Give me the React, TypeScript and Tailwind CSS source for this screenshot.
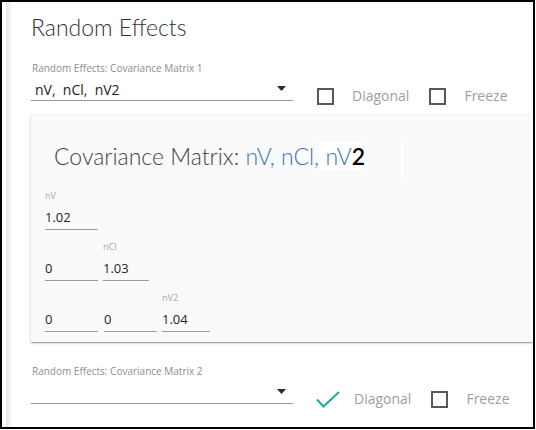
import React from "react";

const Checkbox = () => (
  <div className="w-[17px] h-[17px] shrink-0 border-2 border-[#585858] bg-white" />
);

const Arrow = () => (
  <svg width="9" height="5" viewBox="0 0 9 5" className="mt-[6px] mr-[7px] shrink-0">
    <polygon points="0,0 9,0 4.5,5" fill="#2b2b2b" />
  </svg>
);

const Check = () => (
  <svg width="24" height="17" viewBox="0 0 24 17" className="shrink-0">
    <polyline points="1,8.5 7.5,15.5 23,1" fill="none" stroke="#26a69a" strokeWidth="2" />
  </svg>
);

const SelectRow = ({
  label,
  value,
  checked,
}: {
  label: string;
  value: string;
  checked: boolean;
}) => (
  <div className="flex">
    <div className="w-[262px] shrink-0 flex flex-col">
      <div className="text-[10px] leading-[14px] text-[#8e8e8e] pl-[1px]">{label}</div>
      <div className="mt-[5px] h-[21px] flex justify-between border-b border-[#9a9a9a]">
        <span className="pl-[4px] text-[14px] leading-[20px] text-[#222] whitespace-pre">{value}</span>
        <Arrow />
      </div>
    </div>
    <div className="mt-[25px] h-[20px] flex items-center">
      {checked ? (
        <div className="ml-[23px] flex items-center">
          <Check />
          <span className="ml-[14px] text-[14px] leading-[20px] text-[#9e9e9e]">Diagonal</span>
        </div>
      ) : (
        <div className="ml-[24px] flex items-center">
          <Checkbox />
          <span className="ml-[18px] text-[14px] leading-[20px] text-[#9e9e9e]">Diagonal</span>
        </div>
      )}
      <div className="ml-[20px]">
        <Checkbox />
      </div>
      <span className="ml-[18px] text-[14px] leading-[20px] text-[#9e9e9e]">Freeze</span>
    </div>
  </div>
);

const Cell = ({ w, label, value, ml }: { w: string; label?: string; value: string; ml?: string }) => (
  <div className={`flex flex-col ${w} ${ml ?? ""}`}>
    <div className="h-[12px] text-[9px] leading-[12px] text-[#a8a8a8]">{label ?? ""}</div>
    <div className="mt-[6px] h-[22px] pb-[3px] border-b border-[#9a9a9a] text-[13px] leading-[18px] text-[#222]">
      {value}
    </div>
  </div>
);

export default function App() {
  return (
    <div className="w-[536px] h-[430px] bg-white font-['Open_Sans',sans-serif]">
      <div className="w-[535px] h-[429px] border-2 border-black flex overflow-hidden bg-white">
        <div className="w-[4px] shrink-0" />
        <div className="w-[7px] shrink-0 bg-linear-to-r from-[#e6e6e6] to-white" />
        <div className="flex-1 pl-[18px] pt-[10px] flex flex-col">
          <div className="font-['Lato',sans-serif] text-[23px] leading-[30px] font-light text-[#333]">
            Random Effects
          </div>
          <div className="mt-[19px]">
            <SelectRow label="Random Effects: Covariance Matrix 1" value="nV,  nCl,  nV2" checked={false} />
          </div>
          <div className="mt-[9px] bg-[#fafafa] shadow-[0_1px_3px_rgba(0,0,0,0.2),0_1px_1px_rgba(0,0,0,0.14),0_2px_1px_-1px_rgba(0,0,0,0.12)] pt-[26px] pb-[10px] pl-[14px]">
            <div className="flex h-[30px] items-start pl-[9px]">
              <span className="font-['Lato',sans-serif] text-[23px] leading-[30px] font-light text-[#444] whitespace-pre">
                Covariance Matrix: <span className="text-[#3d77b3]">nV, nCl,</span>
                <span className="bg-white text-[#3d77b3]"> nV</span>
                <span className="bg-white text-black font-semibold">2</span>
              </span>
              <div className="ml-[36px] mt-[1px] w-[3px] h-[37px] bg-white shrink-0" />
            </div>
            <div className="mt-[19px] flex flex-col gap-[11px]">
              <div className="flex">
                <Cell w="w-[53px]" label="nV" value="1.02" />
              </div>
              <div className="flex">
                <Cell w="w-[53px]" value="0" />
                <Cell w="w-[46px]" ml="ml-[5px]" label="nCl" value="1.03" />
              </div>
              <div className="flex">
                <Cell w="w-[53px]" value="0" />
                <Cell w="w-[53px]" ml="ml-[6px]" value="0" />
                <Cell w="w-[48px]" ml="ml-[5px]" label="nV2" value="1.04" />
              </div>
            </div>
          </div>
          <div className="mt-[22px]">
            <SelectRow label="Random Effects: Covariance Matrix 2" value="" checked={true} />
          </div>
        </div>
      </div>
    </div>
  );
}
